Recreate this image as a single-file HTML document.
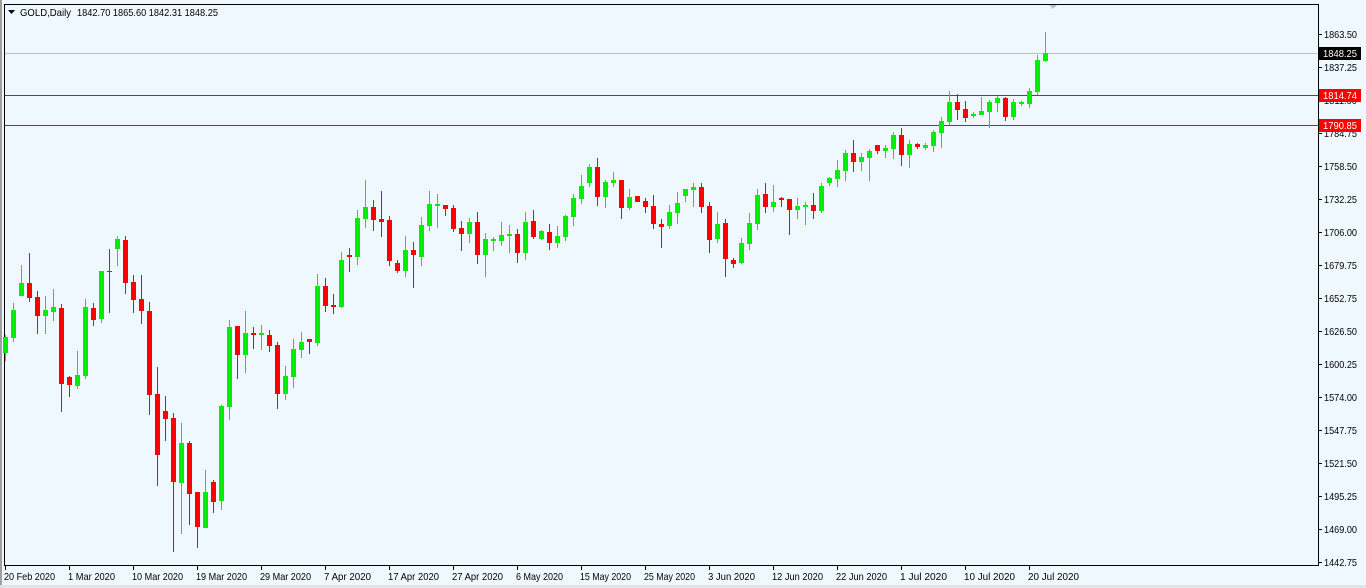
<!DOCTYPE html>
<html><head><meta charset="utf-8"><style>
html,body{margin:0;padding:0;width:1366px;height:588px;overflow:hidden;background:#f0f8ff}
svg{display:block}
text{font-family:"Liberation Sans",sans-serif;font-size:10.5px;fill:#000}
</style></head><body>
<svg id="s" width="1366" height="588" xmlns="http://www.w3.org/2000/svg">
<rect x="0" y="0" width="1366" height="588" fill="#f0f8ff"/>
<rect x="0" y="0" width="2" height="588" fill="#a0a0a0"/>
<rect x="0" y="585" width="1366" height="3" fill="#e0e4e8"/>
<line x1="4.5" y1="4.5" x2="1318.5" y2="4.5" stroke="#000"/>
<line x1="4.5" y1="4" x2="4.5" y2="565" stroke="#000"/>
<line x1="1318.5" y1="4" x2="1318.5" y2="566" stroke="#000"/>
<line x1="4" y1="565.5" x2="1319" y2="565.5" stroke="#000"/>
<line x1="5" y1="53.5" x2="1318" y2="53.5" stroke="#c0c0c0"/>
<line x1="5" y1="95.5" x2="1318" y2="95.5" stroke="#ff0000"/>
<line x1="5" y1="125.5" x2="1318" y2="125.5" stroke="#ff0000"/>
<polygon points="1049,5 1057,5 1053,9" fill="#c0c0c0"/>
<polygon points="8,10 15,10 11.5,14" fill="#000"/>
<text x="20" y="16" textLength="51" lengthAdjust="spacingAndGlyphs">GOLD,Daily</text>
<text x="77" y="16" textLength="141" lengthAdjust="spacingAndGlyphs">1842.70 1865.60 1842.31 1848.25</text>
<g id="c"></g>
<g id="ax"></g>
</svg>
<script>
var d=[
[337,353,335,361,'g'],[310,338,303,342,'g'],[283,296,265,296,'g'],[283,298,253,302,'r'],[297,316,291,334,'r'],
[310,316,296,334,'g'],[307,312,289,321,'g'],[308,384,304,412,'r'],[377,385,376,397,'r'],[375,386,351,389,'g'],
[307,376,299,379,'g'],[308,320,303,326,'r'],[271,319,271,323,'g'],[271,272,249,313,'r'],[239,249,236,266,'g'],
[240,283,236,294,'r'],[282,300,275,313,'r'],[299,311,275,324,'r'],[311,395,302,415,'r'],[394,455,367,486,'r'],
[411,419,396,441,'r'],[418,482,413,552,'r'],[443,483,423,534,'g'],[443,494,441,525,'r'],[492,527,492,548,'r'],
[492,528,470,528,'g'],[482,502,480,513,'r'],[406,501,405,510,'g'],[327,407,320,420,'g'],[326,355,326,379,'r'],
[333,355,311,373,'g'],[333,335,327,349,'r'],[333,335,325,350,'g'],[335,346,330,352,'r'],[345,394,342,409,'r'],
[376,394,366,400,'g'],[349,377,339,388,'g'],[342,350,332,358,'g'],[339,342,339,354,'r'],[286,343,274,346,'g'],
[286,306,278,312,'r'],[305,307,294,314,'r'],[260,307,252,308,'g'],[255,257,248,272,'r'],[218,257,210,265,'g'],
[207,219,180,228,'g'],[207,220,200,231,'r'],[219,222,191,237,'r'],[220,261,216,266,'r'],[263,271,260,273,'r'],
[250,271,236,277,'g'],[250,255,242,288,'r'],[225,257,217,266,'g'],[204,226,191,231,'g'],[204,206,194,228,'g'],
[205,209,205,216,'r'],[208,229,205,232,'r'],[228,234,221,251,'r'],[222,234,218,243,'g'],[222,255,212,264,'r'],
[239,255,233,277,'g'],[239,241,237,251,'g'],[235,241,222,246,'g'],[234,236,225,253,'g'],[234,253,229,263,'r'],
[222,253,212,260,'g'],[221,237,210,239,'r'],[231,239,230,240,'g'],[232,243,224,250,'r'],[236,243,226,248,'g'],
[216,237,215,241,'g'],[198,217,194,226,'g'],[186,199,175,204,'g'],[167,183,164,187,'g'],[167,197,158,206,'r'],
[182,197,180,208,'g'],[180,183,172,187,'g'],[180,208,180,219,'r'],[197,208,189,210,'g'],[196,202,196,202,'r'],
[201,207,198,213,'r'],[206,224,195,229,'r'],[224,227,219,248,'r'],[212,226,205,229,'g'],[203,213,192,224,'g'],
[189,196,189,202,'g'],[187,190,183,207,'g'],[187,207,183,213,'r'],[206,240,202,253,'r'],[224,239,212,243,'g'],
[223,259,219,277,'r'],[260,264,258,268,'r'],[243,263,238,264,'g'],[223,244,213,250,'g'],[195,224,189,230,'g'],
[194,207,183,213,'r'],[202,207,185,212,'g'],[198,200,197,207,'r'],[199,210,199,235,'r'],[206,210,198,219,'g'],
[205,207,202,225,'g'],[205,211,193,219,'r'],[186,211,183,213,'g'],[178,183,177,186,'g'],[170,179,160,187,'g'],
[153,171,150,181,'g'],[153,162,140,172,'r'],[157,162,153,171,'g'],[151,158,149,181,'g'],[145,151,145,154,'r'],
[148,151,145,158,'g'],[135,149,132,159,'g'],[135,155,128,166,'r'],[144,155,140,168,'g'],[144,147,143,149,'r'],
[145,148,143,150,'g'],[132,146,130,152,'g'],[121,133,117,148,'g'],[102,122,91,125,'g'],[102,110,94,120,'r'],
[109,118,101,122,'r'],[114,116,112,118,'g'],[111,115,97,115,'g'],[102,112,100,128,'g'],[98,103,96,112,'g'],
[98,117,97,121,'r'],[102,117,99,120,'g'],[102,104,101,106,'g'],[91,104,88,108,'g'],[60,92,55,95,'g'],[53,61,32,62,'g']];
var h='';
for(var i=0;i<d.length;i++){var c=d[i],x=Math.round(5.3+8*i),col=c[4]=='g'?'#00ee00':'#ff0000';
h+='<rect x="'+x+'" y="'+c[2]+'" width="1" height="'+Math.max(1,c[3]-c[2])+'" fill="'+col+'"/>';
var bh=c[1]-c[0];if(bh<2){h+='<rect x="'+(x-2)+'" y="'+c[0]+'" width="5" height="1" fill="'+col+'"/>';}
else h+='<rect x="'+(x-2)+'" y="'+c[0]+'" width="5" height="'+bh+'" fill="'+col+'"/>';}
document.getElementById('c').innerHTML=h;
var p=['1863.50','1837.25','1811.00','1784.75','1758.50','1732.25','1706.00','1679.75','1652.75','1626.50','1600.25','1574.00','1547.75','1521.50','1495.25','1469.00','1442.75'];
var T=' lengthAdjust="spacingAndGlyphs"';
var a='';
for(var j=0;j<p.length;j++){var y=34+33*j;a+='<rect x="1319" y="'+y+'" width="3" height="1" fill="#000"/><text x="1324" y="'+(y+4)+'" textLength="33"'+T+'>'+p[j]+'</text>';}
var ds=['20 Feb 2020','1 Mar 2020','10 Mar 2020','19 Mar 2020','29 Mar 2020','7 Apr 2020','17 Apr 2020','27 Apr 2020','6 May 2020','15 May 2020','25 May 2020','3 Jun 2020','12 Jun 2020','22 Jun 2020','1 Jul 2020','10 Jul 2020','20 Jul 2020'];
for(var k=0;k<ds.length;k++){var x=5+64*k;var L=Math.round(ds[k].length*4.65);a+='<rect x="'+x+'" y="565" width="1" height="5" fill="#000"/><text x="'+(x-1)+'" y="580" textLength="'+L+'"'+T+'>'+ds[k]+'</text>';}
a+='<rect x="1319" y="47" width="42" height="13" fill="#000"/><text x="1323" y="57" textLength="34"'+T+' style="fill:#fff">1848.25</text>';
a+='<rect x="1319" y="89" width="42" height="13" fill="#ff0000"/><text x="1323" y="99" textLength="34"'+T+' style="fill:#fff">1814.74</text>';
a+='<rect x="1319" y="119" width="42" height="13" fill="#ff0000"/><text x="1323" y="129" textLength="34"'+T+' style="fill:#fff">1790.85</text>';
document.getElementById('ax').innerHTML=a;
</script>
</body></html>
